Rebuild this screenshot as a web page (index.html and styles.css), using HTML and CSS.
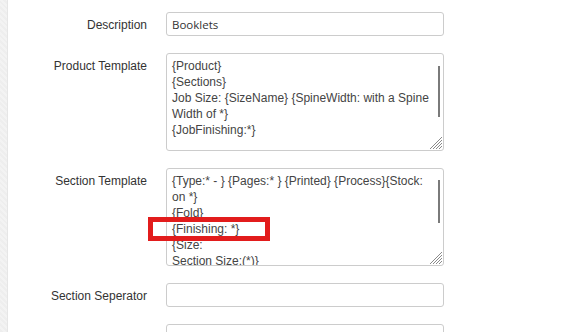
FILE: index.html
```
<!DOCTYPE html>
<html>
<head>
<meta charset="utf-8">
<link rel="stylesheet" href="styles.css">
</head>
<body>
<div class="page">
  <div class="strip"></div>
  <div class="form">
    <label class="lbl">Description</label>
    <div class="field"><input class="inp" type="text" value="Booklets"></div>

    <label class="lbl">Product Template</label>
    <div class="field">
      <textarea class="ta" wrap="off" readonly>{Product}
{Sections}
Job Size: {SizeName} {SpineWidth: with a Spine
Width of *}
{JobFinishing:*}</textarea>
      <span class="thumb thumb-a"></span>
      <svg class="grip" width="12" height="12" viewBox="0 0 12 12"><path d="M12 0L0 12M12 3L3 12M12 6L6 12M12 9L9 12" stroke="#8a8a8a" stroke-width="1" fill="none"/></svg>
    </div>

    <label class="lbl">Section Template</label>
    <div class="field">
      <textarea class="ta" wrap="off" readonly>{Type:* - } {Pages:* } {Printed} {Process}{Stock:
on *}
{Fold}
{Finishing: *}
{Size:
Section Size:(*)}</textarea>
      <span class="thumb thumb-b"></span>
      <svg class="grip" width="12" height="12" viewBox="0 0 12 12"><path d="M12 0L0 12M12 3L3 12M12 6L6 12M12 9L9 12" stroke="#8a8a8a" stroke-width="1" fill="none"/></svg>
      <div class="highlight"></div>
    </div>

    <label class="lbl">Section Seperator</label>
    <div class="field"><input class="inp" type="text" value=""></div>

    <label class="lbl"></label>
    <div class="field"><input class="inp" type="text" value=""></div>
  </div>
</div>
</body>
</html>
```
FILE: styles.css
```
html, body {
  margin: 0;
  padding: 0;
  background: #ffffff;
  overflow: hidden;
}
.page {
  display: flex;
  min-height: 332px;
}
.strip {
  width: 8px;
  flex: none;
  background: repeating-linear-gradient(45deg, #eeeeee 0px, #eeeeee 2px, #f3f3f3 2px, #f3f3f3 4px);
  border-right: 1px solid #e6e6e6;
  box-sizing: border-box;
}
.form {
  display: grid;
  grid-template-columns: 139px 278px;
  column-gap: 19px;
  row-gap: 17px;
  padding-top: 12px;
  align-content: start;
}
.lbl {
  text-align: right;
  font-family: "Liberation Sans", Arial, sans-serif;
  font-size: 12px;
  line-height: 16px;
  color: #333333;
  padding-top: 5px;
}
.field {
  position: relative;
}
.inp {
  display: block;
  box-sizing: border-box;
  width: 278px;
  height: 24px;
  margin: 0;
  padding: 0 5px;
  border: 1px solid #cccccc;
  border-radius: 3px;
  font-family: "Open Sans", sans-serif;
  font-size: 11.5px;
  color: #333333;
  background: #ffffff;
  outline: none;
}
.ta {
  display: block;
  box-sizing: border-box;
  width: 278px;
  height: 98px;
  margin: 0;
  padding: 4px 5px;
  border: 1px solid #cccccc;
  border-radius: 3px;
  font-family: "Liberation Sans", Arial, sans-serif;
  font-size: 12px;
  line-height: 16px;
  color: #444444;
  background: #ffffff;
  resize: none;
  overflow: hidden;
  white-space: pre;
  outline: none;
}
.thumb {
  position: absolute;
  left: 272px;
  width: 2px;
  background: #7a7a7a;
}
.thumb-a {
  top: 13px;
  height: 51px;
}
.thumb-b {
  top: 12px;
  height: 43px;
}
.grip {
  position: absolute;
  right: 2px;
  bottom: 2px;
}
.highlight {
  position: absolute;
  left: -18px;
  top: 49px;
  width: 122px;
  height: 24px;
  box-sizing: border-box;
  border: 5px solid #e21c1c;
}
```
